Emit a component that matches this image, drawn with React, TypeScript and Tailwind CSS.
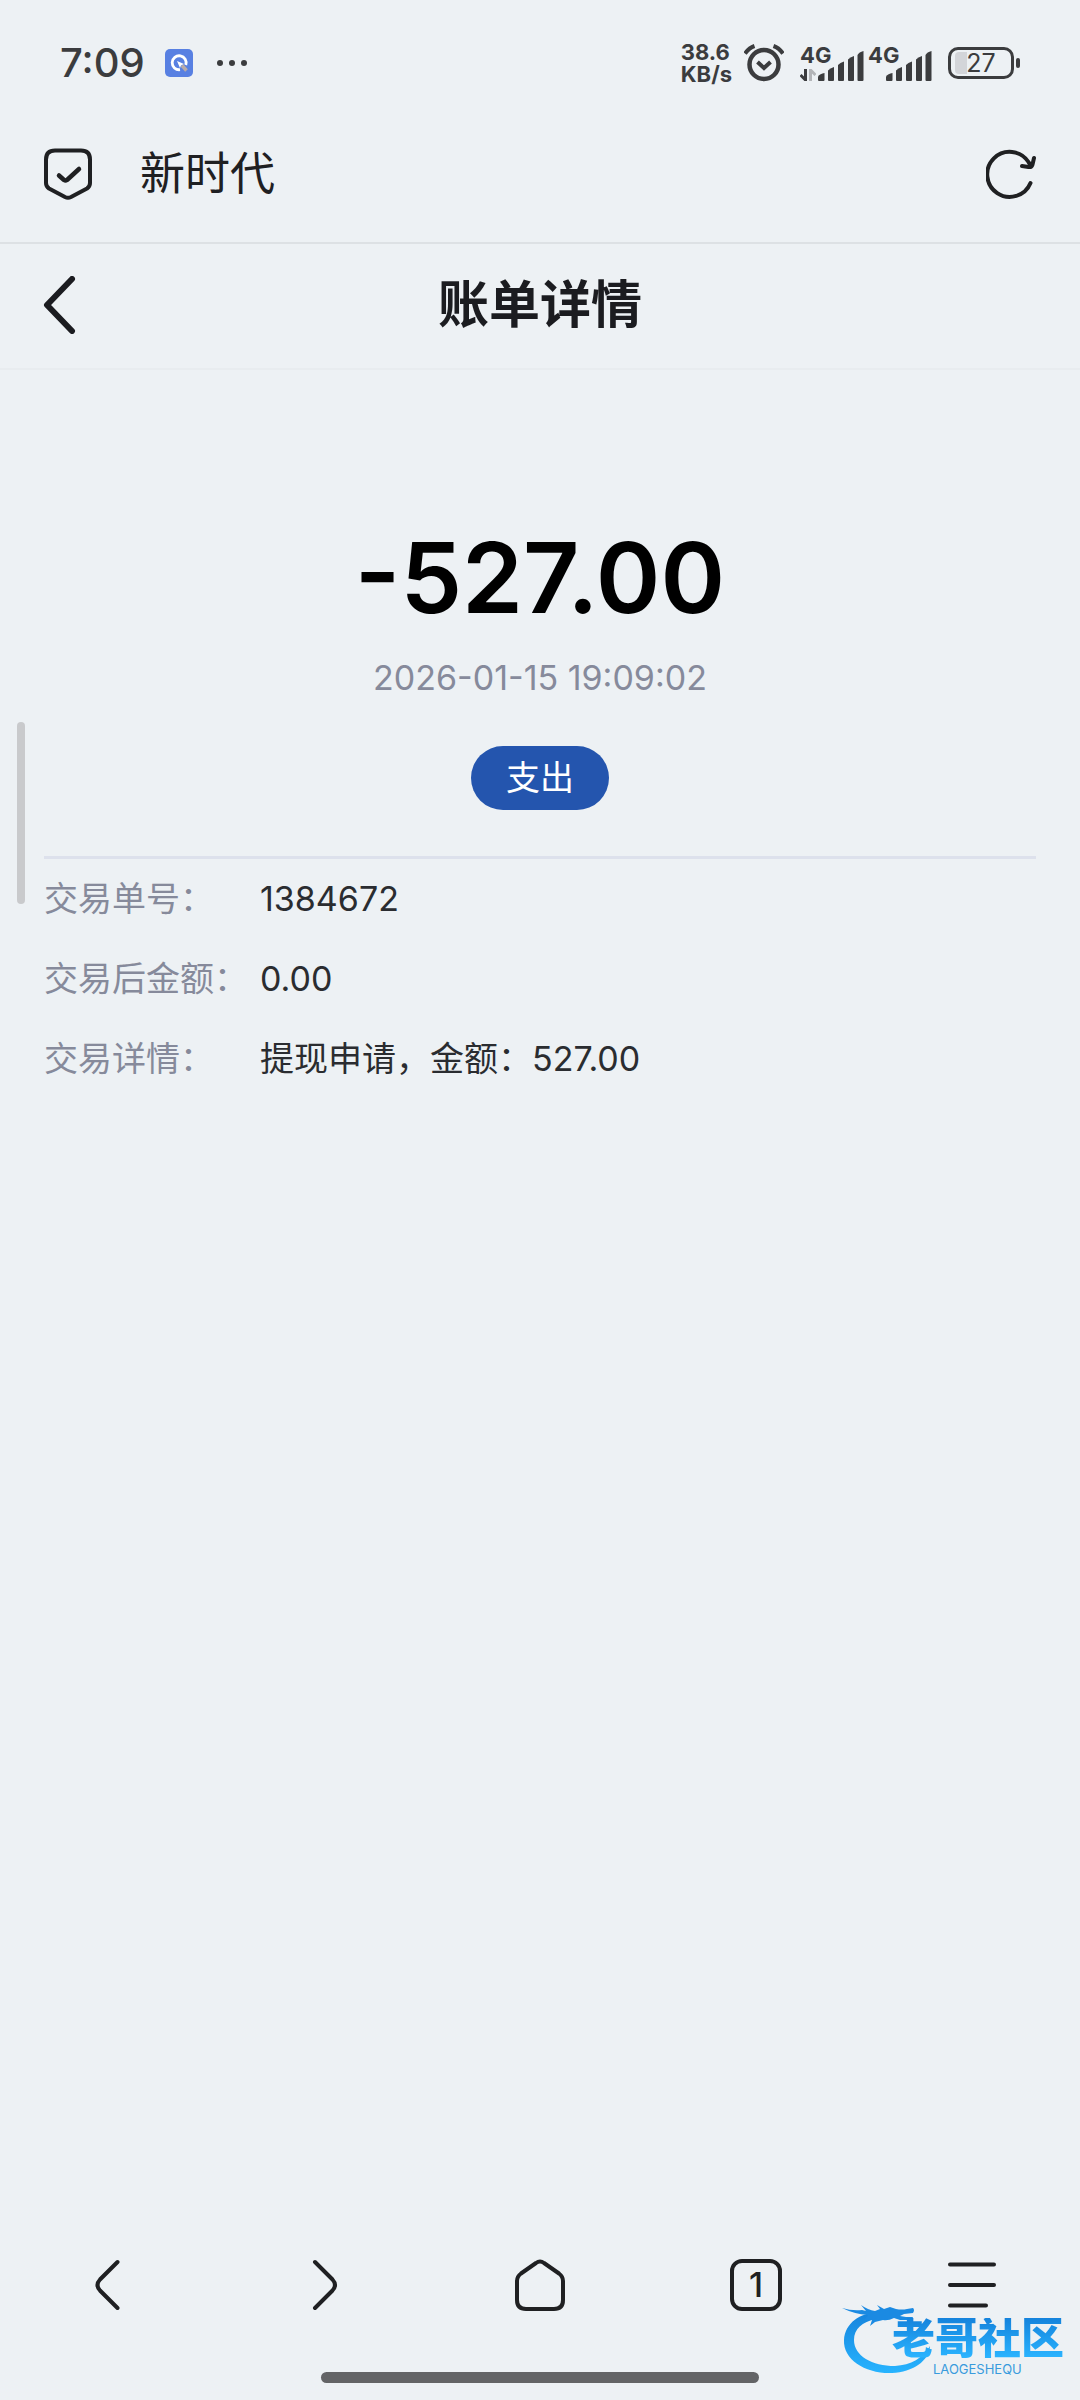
import React from 'react';

const details = [
  { label: '交易单号：', value: '1384672' },
  { label: '交易后金额：', value: '0.00' },
  { label: '交易详情：', value: '提现申请，金额：527.00' },
];

const SignalBars: React.FC = () => (
  <svg width="46" height="30" viewBox="0 0 46 30" fill="currentColor" aria-hidden="true">
    <path d="M0 29V25.5Q2 22.5 6.5 22V29Q6.500 30 5.500 30H1Q0 30 0 29Z" />
    <path d="M10 29V19.500Q12 17 16 16V29Q16 30 15 30H11Q10 30 10 29Z" />
    <path d="M20 29V14Q22 11.500 26 10.500V29Q26 30 25 30H21Q20 30 20 29Z" />
    <path d="M30 29V8.500Q32 6 36 5V29Q36 30 35 30H31Q30 30 30 29Z" />
    <path d="M39.500 29V4Q41 1 45.500 0V29Q45.500 30 44.500 30H40.500Q39.500 30 39.500 29Z" />
  </svg>
);

const Signal: React.FC<{ active?: boolean }> = ({ active }) => (
  <div className="relative flex h-9 w-16 items-end justify-end">
    <span className="absolute top-0 left-0 text-[22px] leading-5 font-bold">4G</span>
    {active && (
      <svg className="absolute bottom-0 left-0" width="16" height="12" viewBox="0 0 16 12" fill="none" strokeWidth="3" aria-hidden="true">
        <path d="M5.500 0V11L0.500 6" stroke="currentColor" />
        <path d="M10.500 12V1L15.500 6" stroke="#b3b5b8" />
      </svg>
    )}
    <SignalBars />
  </div>
);

const StatusBar: React.FC = () => (
  <div className="flex h-[126px] items-center justify-between px-[60px] text-[#3b3c3e]">
    <div className="flex items-center">
      <span className="text-[40px] leading-10 font-medium">7:09</span>
      <svg className="ml-5" width="28" height="28" viewBox="0 0 28 28" fill="none" aria-hidden="true">
        <rect width="28" height="28" rx="5" fill="#5880e2" />
        <path d="M15 20.700A7 7 0 1 1 20.800 16" stroke="#fff" strokeWidth="2.800" />
        <path d="M12 12L19 15L16 16.500L15 19Z" fill="#fff" />
        <path d="M17 16.500L21.500 21.500" stroke="#b9aba8" strokeWidth="3.500" />
      </svg>
      <svg className="ml-6" width="30" height="6" viewBox="0 0 30 6" fill="currentColor" aria-hidden="true">
        <circle cx="3" cy="3" r="3" />
        <circle cx="15" cy="3" r="3" />
        <circle cx="27" cy="3" r="3" />
      </svg>
    </div>
    <div className="flex items-center">
      <div className="text-[22px] leading-[22px] font-bold">
        <div>38.6</div>
        <div>KB/s</div>
      </div>
      <svg className="ml-3" width="40" height="38" viewBox="0 0 40 38" fill="none" stroke="currentColor" strokeWidth="4.500" aria-hidden="true">
        <circle cx="20" cy="20.500" r="14.500" />
        <path d="M1 9.500Q5 4 10.500 2M39 9.500Q35 4 29.500 2" strokeWidth="4" />
        <path d="M13.500 18L20 24L26.500 18" strokeWidth="4" />
      </svg>
      <div className="ml-4 flex gap-1">
        <Signal active />
        <Signal />
      </div>
      <div className="ml-4 flex items-center gap-[2px]">
        <div className="relative flex h-8 w-[66px] items-center justify-center rounded-[10px] border-3 border-current">
          <span className="absolute top-[2px] left-1 h-[22px] w-3 rounded-l bg-[#d3d5d9]" />
          <span className="relative text-[25px] leading-6">27</span>
        </div>
        <span className="h-[10px] w-1 rounded-sm bg-current" />
      </div>
    </div>
  </div>
);

const BrowserBar: React.FC = () => (
  <div className="flex h-[118px] items-center border-b-2 border-[#dde1e4] px-11 pb-5 text-[#1f2022]">
    <svg width="48" height="52" viewBox="0 0 48 52" fill="none" stroke="currentColor" strokeWidth="4" strokeLinecap="round" strokeLinejoin="round" aria-hidden="true">
      <path d="M11 2.500H37Q46 2.500 46 11.500V35Q46 38.500 43 40.500L27 49Q24 50.500 21 49L5 40.500Q2 38.500 2 35V11.500Q2 2.500 11 2.500Z" />
      <path d="M15 27.500L20 32Q21.500 33 23 32L35 21" strokeWidth="4.500" />
    </svg>
    <span className="ml-12 flex-1 text-[45px] leading-[56px]">新时代</span>
    <button type="button" aria-label="刷新">
      <svg width="50" height="50" viewBox="0 0 50 50" fill="none" stroke="currentColor" strokeWidth="4" strokeLinecap="round" strokeLinejoin="round" aria-hidden="true">
        <path d="M44.500 34A22.500 22.500 0 1 1 42.500 13L44.500 16.500" />
        <path d="M48 9L46.500 15.500Q45.500 18.500 42.500 18L36 17" />
      </svg>
    </button>
  </div>
);

const TitleBar: React.FC = () => (
  <header className="grid h-[126px] grid-cols-[1fr_auto_1fr] items-center border-b-2 border-[#e8ecef] px-[43px] pb-[2px] text-[#1b1c20]">
    <button type="button" aria-label="返回">
      <svg width="33" height="58" viewBox="0 0 33 58" fill="none" stroke="currentColor" strokeWidth="6" strokeLinecap="round" strokeLinejoin="round" aria-hidden="true">
        <path d="M29 3L4 29L29 55" />
      </svg>
    </button>
    <h1 className="text-[51px] leading-[60px] font-bold">账单详情</h1>
  </header>
);

const Watermark: React.FC = () => (
  <div className="pointer-events-none absolute right-4 bottom-6 h-[74px] w-[222px]">
    <svg className="absolute inset-0" width="222" height="74" viewBox="0 0 222 74" aria-hidden="true">
      <defs>
        <linearGradient id="dragon" x1="0" y1="0" x2="0" y2="1">
          <stop offset="0" stopColor="#1583dc" />
          <stop offset="1" stopColor="#27b4ff" />
        </linearGradient>
      </defs>
      {/* body curling round, then head and whiskers */}
      <path fill="url(#dragon)" d="M36 10C18 11 3 21 2 38C1 58 24 72 50 71C71 70 87 59 88 44C81 56 69 63 53 64C30 64 12 54 12 38C12 27 20 20 34 17Z" />
      <path fill="#1b8ae2" d="M0 6Q10 9 20 8L24 9L19 3Q26 8 33 9L38 7L35 3L42 7L48 5L54 7Q60 8 65 7L71 6Q73 8 71 11L62 12L58 14L64 15H71Q70 19 65 18L58 18L52 16Q46 19 41 18L33 20L28 24L30 18L22 18L26 13Q12 12 0 6Z" />
    </svg>
    <span className="absolute top-4 right-0 bg-gradient-to-b from-[#1583dc] to-[#2bb4ff] bg-clip-text text-[43px] leading-10 font-black whitespace-nowrap text-transparent">
      老哥社区
    </span>
    <span className="absolute top-[61px] left-[91px] text-[13px] leading-[13px] text-[#399bdd]">LAOGESHEQU</span>
  </div>
);

const BottomNav: React.FC = () => (
  <nav className="grid grid-cols-5 py-[26px] text-[#1f2022] [&>button]:flex [&>button]:h-[52px] [&>button]:items-center [&>button]:justify-center">
    <button type="button" aria-label="后退">
      <svg width="52" height="52" viewBox="0 0 52 52" fill="none" stroke="currentColor" strokeWidth="4" strokeLinecap="round" aria-hidden="true">
        <path d="M35.500 3L18 20.500Q13 26 18 31.500L35.500 49" />
      </svg>
    </button>
    <button type="button" aria-label="前进">
      <svg width="52" height="52" viewBox="0 0 52 52" fill="none" stroke="currentColor" strokeWidth="4" strokeLinecap="round" aria-hidden="true">
        <path d="M17 3L34.500 20.500Q39.500 26 34.500 31.500L17 49" />
      </svg>
    </button>
    <button type="button" aria-label="主页">
      <svg width="52" height="52" viewBox="0 0 52 52" fill="none" stroke="currentColor" strokeWidth="4" strokeLinejoin="round" aria-hidden="true">
        <path d="M22 4Q26 1 30 4L45 14.500Q49 17.500 49 22V41Q49 50 40 50H12Q3 50 3 41V22Q3 17.500 7 14.500Z" />
      </svg>
    </button>
    <button type="button" aria-label="标签页">
      <span className="flex size-[52px] items-center justify-center rounded-xl border-4 border-current text-[34px] leading-9 font-medium">1</span>
    </button>
    <button type="button" aria-label="菜单">
      <svg width="52" height="52" viewBox="0 0 52 52" fill="none" stroke="currentColor" strokeWidth="4" strokeLinecap="round" aria-hidden="true">
        <path d="M4 5.500H48M4 26H48M4 46.500H40" />
      </svg>
    </button>
  </nav>
);

const App: React.FC = () => {
  return (
    <div className="relative flex min-h-screen flex-col bg-[#edf1f4] font-['Inter','Noto_Sans_CJK_SC',sans-serif]">
      <StatusBar />
      <BrowserBar />
      <TitleBar />
      <main className="flex-1 px-11 pt-[148px]">
        <section className="flex flex-col items-center border-b-3 border-[#dde1ec] pb-[46px]">
          <p className="text-[98px] leading-[120px] font-semibold text-black">-527.00</p>
          <p className="mt-[18px] text-[34px] leading-[44px] text-[#868a9b]">2026-01-15 19:09:02</p>
          <span className="mt-[46px] flex h-16 items-center rounded-full bg-[#2455ae] px-[35px] text-[34px] leading-10 text-white">
            支出
          </span>
        </section>
        <dl>
          {details.map((item) => (
            <div key={item.label} className="flex h-20 items-center text-[34px] leading-10">
              <dt className="w-[216px] shrink-0 whitespace-nowrap text-[#868a9b]">{item.label}</dt>
              <dd className="text-[#2a2c30]">{item.value}</dd>
            </div>
          ))}
        </dl>
      </main>
      {/* side gesture handle */}
      <div className="absolute top-[722px] left-[17px] h-[182px] w-2 rounded-full bg-[#c9cacc]" />
      <BottomNav />
      <div className="mx-auto mt-[35px] mb-[17px] h-[11px] w-[438px] rounded-full bg-[#636466]" />
      <Watermark />
    </div>
  );
};

export default App;
